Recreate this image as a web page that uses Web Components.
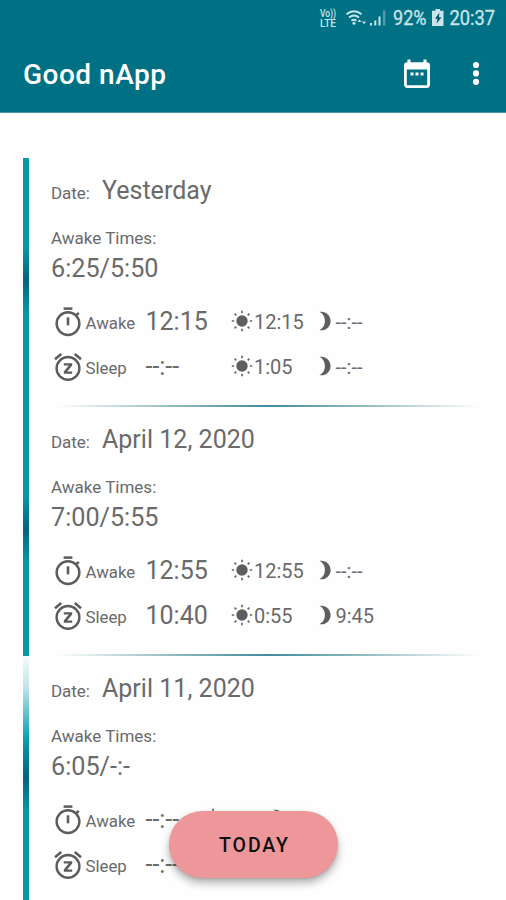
<!DOCTYPE html>
<html lang="en">
<head>
<meta charset="utf-8">
<title>Good nApp</title>
<style>
html,body{margin:0;height:900px;overflow:hidden;background:#fefefe}
body{font-family:Roboto,"Noto Sans",sans-serif;color:#6a6a6a}
</style>
</head>
<body>
<nap-app></nap-app>
<script>
const define = (name, html) => customElements.define(name, class extends HTMLElement {
  connectedCallback() {
    if (this.shadowRoot) return;
    const t = document.createElement('template');
    t.innerHTML = typeof html === 'function' ? html(this) : html;
    this.attachShadow({mode: 'open'}).append(t.content.cloneNode(true));
  }
});

const ICONS = {
  awake: [28, 32, `<g fill="none" stroke="#5c5c5c"><circle cx="14" cy="17.6" r="11.4" stroke-width="2.4"/><path d="M9.6 2.6h8.8" stroke-width="2.5"/><path d="M14 11.3v8" stroke-width="2.6"/><path d="M22.2 9.4l2.6-2.6" stroke-width="2.4"/></g>`],
  sleep: [28, 32, `<g fill="none" stroke="#5c5c5c"><circle cx="14" cy="17.4" r="11.4" stroke-width="2.4"/><path d="M1 8.2l6.2-5.2M27 8.2l-6.2-5.2" stroke-width="2.6"/></g><path d="M9.800 12.200h8.400v2.400l-5 5.800h5v2.400H9.800v-2.400l5-5.800h-5z" fill="#5c5c5c"/>`],
  sun: [22, 22, `<circle cx="11" cy="11" r="5.7" fill="#5e5e5e"/><path d="M11 .8v2.4M11 18.8v2.4M.8 11h2.4M18.8 11h2.4M3.6 3.6l1.7 1.7M16.7 16.7l1.7 1.7M3.6 18.4l1.7-1.7M16.7 5.3l1.7-1.7" stroke="#686868" stroke-width="1.7"/>`],
  moon: [14, 20, `<path d="M1.4 .8C7.5-.3 12.6 4.200 12.600 10S7.500 20.300 1.400 19.200C5 17.500 6.900 14 6.900 10S5 2.500 1.400.8z" fill="#5e5e5e"/>`],
  calendar: [28, 32, `<path d="M6 1.500v5M22 1.500v5" stroke="#fff" stroke-width="3"/><rect x="2.400" y="5.600" width="23.200" height="23" rx="2" fill="none" stroke="#fff" stroke-width="2.800"/><path d="M2 5h24v6.500H2z" fill="#fff"/><path d="M7.500 16h3M12.500 16h3M17.500 16h3" stroke="#fff" stroke-width="3"/>`],
  more: [10, 26, `<g fill="#fff"><circle cx="5" cy="4" r="3.100"/><circle cx="5" cy="12.400" r="3.100"/><circle cx="5" cy="20.800" r="3.100"/></g>`]
};
define('nap-icon', el => {
  const [w, h, body] = ICONS[el.getAttribute('name')];
  return `<style>:host{display:block;flex:none;width:${w}px;height:${h}px}svg{display:block}</style>
  <svg width="${w}" height="${h}" viewBox="0 0 ${w} ${h}">${body}</svg>`;
});

define('nap-status-bar', `<style>:host{display:block;height:36px}svg{display:block;font-family:Roboto,sans-serif;fill:#c9e4ea}</style>
<svg width="506" height="36">
  <g font-size="10" font-weight="500"><text x="320" y="17" textLength="16" lengthAdjust="spacingAndGlyphs">Vo))</text><text x="320" y="26.500" textLength="16" lengthAdjust="spacingAndGlyphs">LTE</text></g>
  <g fill="none" stroke="#c9e4ea" stroke-width="1.900"><path d="M346.500 14.200q7.500-6 15 0M349 17.600q5-4 10 0M351.500 20.700q2.500-2 5 0"/></g>
  <circle cx="354" cy="23.300" r="1.500"/>
  <path d="M357.500 22l2-2.500 2 2.500zM362 21.500l2 2.800 2-2.800z"/>
  <path d="M370 23h2v2.500h-2zM374.300 20.500h2v5h-2zM378.500 16.500h2v9h-2z"/><path d="M383 10.500h2.400v15H383z" opacity=".4"/>
  <text x="393" y="25" font-size="20" textLength="33.500" lengthAdjust="spacingAndGlyphs" stroke="#c9e4ea" stroke-width=".3">92%</text>
  <path d="M435.500 9h4.500v1.800h3.500V26h-11.500V10.800h3.500z"/><path d="M439.500 12.500l-4.500 6.300h2.500l-1 5 5-6.600h-2.700z" fill="#02566a"/>
  <text x="449.500" y="25" font-size="20" textLength="45.500" lengthAdjust="spacingAndGlyphs" stroke="#c9e4ea" stroke-width=".3">20:37</text>
</svg>`);

define('nap-toolbar', `<style>:host{display:flex;align-items:center;height:76px;padding:0 25px 0 23px;color:#fff}
h1{margin:2px 0 0;flex:1;font-size:28px;line-height:36px;font-weight:500;letter-spacing:.5px}
nap-icon+nap-icon{margin-left:40px}</style>
<h1><slot></slot></h1><nap-icon name="calendar"></nap-icon><nap-icon name="more"></nap-icon>`);

define('nap-reading', `<style>:host{display:flex;height:45px;align-items:flex-start}
.label{width:63px;padding-left:3px;font-size:16.800px;line-height:32px;padding-top:1px;box-sizing:border-box}
.main{width:var(--main-w,86px);font-size:25px;line-height:31px}
.sub{font-size:20px;line-height:32px;margin-left:.5px}
nap-icon[name=sun]{margin-top:4px}nap-icon[name=moon]{margin:5px 3px 0 0}
.day{display:flex;width:var(--day-w,86.500px)}.night{display:flex}</style>
<slot name="icon"></slot><span class="label"><slot></slot></span><span class="main"><slot name="main"></slot></span>
<span class="day"><nap-icon name="sun"></nap-icon><span class="sub"><slot name="day"></slot></span></span>
<span class="night"><nap-icon name="moon"></nap-icon><span class="sub"><slot name="night"></slot></span></span>`);

define('nap-entry', `<style>:host{display:grid;grid-template-columns:5.500px 1fr;column-gap:22.200px;height:249px;padding-left:23.300px}
.bar{background:var(--bar,linear-gradient(#0797a8 0,#0797a8 36%,#02647c 49%,#0797a8 62%,#0797a8))}
.body{display:flex;flex-direction:column}
.date{display:flex;align-items:baseline;padding-top:18px;line-height:30px}
.date b{font:400 17px/30px Roboto,sans-serif;width:51px;letter-spacing:-.05px}.date span{font-size:25px;letter-spacing:.02px}
.cap{font-size:17px;line-height:20px;margin-top:20px;letter-spacing:0}
.total{font-size:25.200px;line-height:30px;margin-top:5.500px}
.rows{margin:22.500px 0 0 3.500px}
hr{border:0;height:2px;margin:auto 26px 0 5px;background:linear-gradient(90deg,transparent,#8fb9bf 28%,#428b9d 50%,#8fb9bf 72%,transparent)}</style>
<div class="bar"></div><div class="body"><div class="date"><b>Date:</b><span><slot name="date"></slot></span></div>
<div class="cap">Awake Times:</div><div class="total"><slot name="total"></slot></div><div class="rows"><slot></slot></div><hr></div>`);

define('nap-fab', `<style>:host{display:flex;align-items:center;justify-content:center;width:169px;height:67px;border-radius:34px;background:#ee979b;color:#111;box-shadow:0 5px 9px rgba(0,0,0,.3),0 1px 3px rgba(0,0,0,.12);font-size:19.500px;font-weight:500;letter-spacing:1.900px;text-indent:2px}slot{display:block;padding-top:1px}</style><slot></slot>`);

const reading = (kind, label, [main, day, night]) => `<nap-reading><nap-icon slot="icon" name="${kind}"></nap-icon>${label}<span slot="main">${main}</span><span slot="day">${day}</span><span slot="night">${night}</span></nap-reading>`;
const N = '--:--';
const entries = [
  ['Yesterday', '6:25/5:50', ['12:15', '12:15', N], [N, '1:05', N]],
  ['April 12, 2020', '7:00/5:55', ['12:55', '12:55', N], ['10:40', '0:55', '9:45']],
  ['April 11, 2020', '6:05/-:-', [N, N, N], [N, N, N]]
];
define('nap-app', `<style>:host{display:block;position:relative;height:900px;overflow:hidden}
header{background:#007184;height:113px;border-bottom:1px solid #4d98a6;box-sizing:border-box}
main{padding-top:45px}
nap-entry:last-child{--main-w:57px;--day-w:70px;--bar:linear-gradient(#f5fbfc 0,#c5e6eb 12%,#0fa5b4 32%,#078a9c 38%,#02647c 49%,#0797a8 62%,#0797a8)}
nap-fab{position:absolute;left:169px;top:811px}</style>
<header><nap-status-bar></nap-status-bar><nap-toolbar>Good nApp</nap-toolbar></header>
<main>${entries.map(([d, t, a, s]) => `<nap-entry><span slot="date">${d}</span><span slot="total">${t}</span>${reading('awake', 'Awake', a)}${reading('sleep', 'Sleep', s)}</nap-entry>`).join('')}</main>
<nap-fab>TODAY</nap-fab>`);
</script>
</body>
</html>
